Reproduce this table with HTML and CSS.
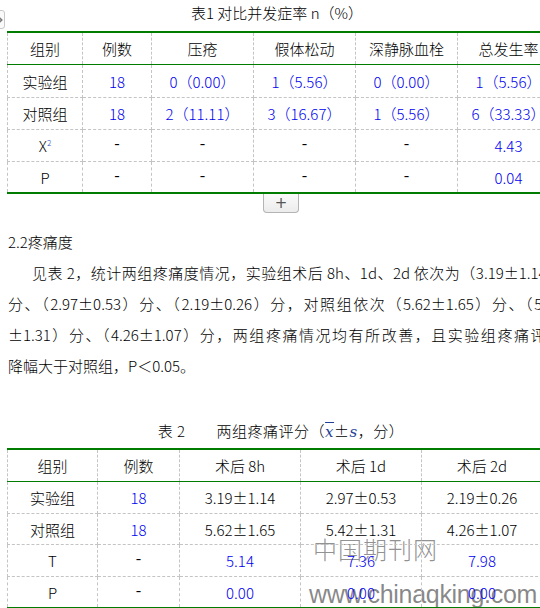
FILE: index.html
```html
<!DOCTYPE html>
<html lang="zh-CN">
<head>
<meta charset="utf-8">
<title>对比并发症率</title>
<link rel="stylesheet" href="styles.css">
</head>
<body>
<div class="edge-handle">
  <svg width="6" height="8" viewBox="0 0 6 8"><path d="M0 4H5M2.5 1.5L5 4L2.5 6.5" fill="none" stroke="#777" stroke-width="1.2"/></svg>
</div>

<div class="watermark">
  <span class="wm-cn">中国期刊网</span>
  <span class="wm-url">www.chinaqking.com</span>
</div>

<div class="page">
  <div class="caption cap1">表1 对比并发症率 n（%）</div>
  <table class="data t1">
    <colgroup><col class="c75"><col class="c69"><col class="c102"><col class="c102"><col class="c102"><col class="c102"></colgroup>
    <thead>
      <tr><th>组别</th><th>例数</th><th>压疮</th><th>假体松动</th><th>深静脉血栓</th><th>总发生率</th></tr>
    </thead>
    <tbody>
      <tr class="r32"><td>实验组</td><td class="num">18</td><td class="num">0（0.00）</td><td class="num">1（5.56）</td><td class="num">0（0.00）</td><td class="num">1（5.56）</td></tr>
      <tr class="r31"><td>对照组</td><td class="num">18</td><td class="num">2（11.11）</td><td class="num">3（16.67）</td><td class="num">1（5.56）</td><td class="num">6（33.33）</td></tr>
      <tr class="r31"><td>X<sup class="sq">2</sup></td><td class="dash">-</td><td class="dash">-</td><td class="dash">-</td><td class="dash">-</td><td class="num">4.43</td></tr>
      <tr class="r30"><td>P</td><td class="dash">-</td><td class="dash">-</td><td class="dash">-</td><td class="dash">-</td><td class="num">0.04</td></tr>
    </tbody>
  </table>
  <div class="tools"><button class="add-btn" type="button">+</button></div>

  <h3 class="sec">2.2疼痛度</h3>
  <p class="para">
    <span class="ln first">见表 2，统计两组疼痛度情况，实验组术后 8h、1d、2d 依次为（3.19±1.14）</span>
    <span class="ln">分、（2.97±0.53）分、（2.19±0.26）分，对照组依次（5.62±1.65）分、（5.42</span>
    <span class="ln">±1.31）分、（4.26±1.07）分，两组疼痛情况均有所改善，且实验组疼痛评分</span>
    <span class="ln last">降幅大于对照组，P＜0.05。</span>
  </p>

  <div class="caption cap2">表 2　　两组疼痛评分（<span class="xbar">x</span>±<span class="svar">s</span>，分）</div>
  <table class="data t2">
    <colgroup><col class="c90"><col class="c82"><col class="c121"><col class="c121"><col class="c121"></colgroup>
    <thead>
      <tr><th>组别</th><th>例数</th><th>术后 8h</th><th>术后 1d</th><th>术后 2d</th></tr>
    </thead>
    <tbody>
      <tr class="r31"><td>实验组</td><td class="num">18</td><td>3.19±1.14</td><td>2.97±0.53</td><td>2.19±0.26</td></tr>
      <tr class="r30"><td>对照组</td><td class="num">18</td><td>5.62±1.65</td><td>5.42±1.31</td><td>4.26±1.07</td></tr>
      <tr class="r31"><td>T</td><td class="dash">-</td><td class="num">5.14</td><td class="num">7.36</td><td class="num">7.98</td></tr>
      <tr class="r30"><td>P</td><td class="dash">-</td><td class="num">0.00</td><td class="num">0.00</td><td class="num">0.00</td></tr>
    </tbody>
  </table>
</div>
</body>
</html>
```

FILE: styles.css
```css
html {
  margin: 0;
  padding: 0;
  background: #fff;
}
body {
  margin: 0;
  padding: 0;
  width: 540px;
  height: 608px;
  overflow: hidden;
  position: relative;
  font-family: "Noto Sans CJK SC", "Liberation Sans", sans-serif;
  font-weight: 300;
  font-size: 15px;
  color: #000;
}
.page {
  width: 600px;
}
.edge-handle {
  position: absolute;
  left: -12px;
  top: 10px;
  width: 17px;
  height: 19px;
  border: 1px solid #c8c8c8;
  border-radius: 3px;
  background: #fafafa;
  display: flex;
  align-items: center;
  justify-content: flex-end;
  padding-right: 1px;
  box-sizing: border-box;
  z-index: 2;
}
.edge-handle svg { display: block; }

.caption {
  text-align: center;
  line-height: 20px;
  white-space: nowrap;
}
.cap1 {
  width: 554px;
  padding-top: 3px;
  height: 28px;
}
.cap2 {
  width: 562px;
  margin-top: 40px;
  height: 27px;
  letter-spacing: 0.5px;
}
.xbar {
  font-family: "DejaVu Serif", serif;
  font-style: italic;
  color: #1e3f95;
  text-decoration: overline;
  font-size: 15px;
}
.svar {
  font-family: "DejaVu Serif", serif;
  font-style: italic;
  color: #1e3f95;
  font-size: 15px;
}

table.data {
  margin-left: 7px;
  border-collapse: collapse;
  table-layout: fixed;
  border-top: 2px solid #007c00;
  border-bottom: 2px solid #007c00;
}
.t1 { width: 553px; }
.t2 { width: 535px; }
col.c75 { width: 75px; }
col.c69 { width: 69px; }
col.c102 { width: 102px; }
col.c90 { width: 90px; }
col.c82 { width: 82px; }
col.c121 { width: 121px; }

table.data th,
table.data td {
  padding: 0;
  text-align: center;
  vertical-align: middle;
  font-weight: 300;
  border-left: 1px dashed #c4c4c4;
  border-right: 1px dashed #c4c4c4;
  border-bottom: 1px dashed #c4c4c4;
  white-space: nowrap;
}
table.data thead th {
  height: 31px;
  border-bottom: 1px solid #007c00;
}
.t2 thead th { height: 30px; }
tr.r32 td { height: 32px; }
tr.r31 td { height: 31px; }
tr.r30 td { height: 30px; }
table.data tbody tr:last-child td { border-bottom: none; }
td.num { color: #0000f0; }
td.dash {
  font-family: "Liberation Mono", monospace;
  font-weight: 400;
}
sup.sq {
  font-size: 8px;
  color: #3050c0;
  vertical-align: 6px;
  line-height: 0;
}

.tools {
  height: 19px;
  padding-left: 263px;
}
.add-btn {
  display: block;
  width: 36px;
  height: 19px;
  margin: 0;
  padding: 0;
  border: 1px solid #b4b4b4;
  border-top: none;
  border-radius: 0 0 4px 4px;
  background: linear-gradient(#fafafa, #ececec);
  color: #555;
  font-family: "DejaVu Sans", sans-serif;
  font-size: 15px;
  line-height: 16px;
}

.sec {
  margin: 13px 0 0 8px;
  font-size: 15px;
  font-weight: 300;
  line-height: 31px;
}
.para {
  margin: 0 0 0 8px;
  width: 554px;
  line-height: 31px;
}
.ln {
  display: block;
  white-space: nowrap;
  text-align: justify;
  text-align-last: justify;
  text-justify: inter-character;
}
.ln.first { padding-left: 24px; }
.ln.last {
  text-align: left;
  text-align-last: left;
}

.watermark {
  position: absolute;
  left: 309px;
  top: 534px;
  z-index: -1;
  display: flex;
  flex-direction: column;
  pointer-events: none;
}
.wm-cn {
  margin-left: 4px;
  font-size: 24px;
  font-weight: 300;
  letter-spacing: 1px;
  line-height: 30px;
  color: rgba(110, 110, 110, 0.75);
}
.wm-url {
  margin-top: 16px;
  font-family: "Liberation Sans", sans-serif;
  font-size: 25px;
  line-height: 28px;
  letter-spacing: -0.3px;
  color: rgba(115, 115, 115, 0.85);
}
```
